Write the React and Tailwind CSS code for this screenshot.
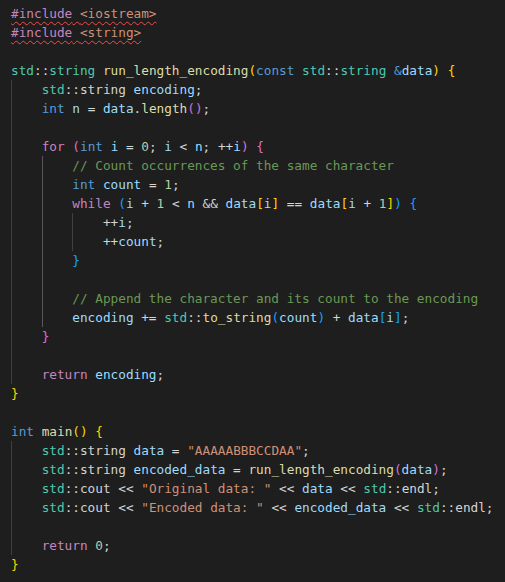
import React from "react";

const K = "text-[#569CD6]";
const P = "text-[#C586C0]";
const T = "text-[#4EC9B0]";
const F = "text-[#DCDCAA]";
const V = "text-[#9CDCFE]";
const W = "text-[#D4D4D4]";
const S = "text-[#CE9178]";
const N = "text-[#B5CEA8]";
const C = "text-[#6A9955]";
const B1 = "text-[#FFD700]";
const B2 = "text-[#DA70D6]";
const B3 = "text-[#179FFF]";

const lines = [
  { g: 0, squiggle: true, t: [["#include", P], [" ", W], ["<iostream>", S]] },
  { g: 0, squiggle: true, t: [["#include", P], [" ", W], ["<string>", S]] },
  { g: 0, t: [] },
  { g: 0, t: [["std", T], ["::", W], ["string", T], [" ", W], ["run_length_encoding", F], ["(", B1], ["const", K], [" ", W], ["std", T], ["::", W], ["string", T], [" ", W], ["&", K], ["data", V], [")", B1], [" ", W], ["{", B1]] },
  { g: 1, t: [["std", T], ["::string", W], [" ", W], ["encoding", V], [";", W]] },
  { g: 1, t: [["int", K], [" ", W], ["n", V], [" = ", W], ["data", V], [".", W], ["length", F], ["(", B2], [")", B2], [";", W]] },
  { g: 1, t: [] },
  { g: 1, t: [["for", P], [" ", W], ["(", B2], ["int", K], [" ", W], ["i", V], [" = ", W], ["0", N], ["; ", W], ["i", V], [" < ", W], ["n", V], ["; ++", W], ["i", V], [")", B2], [" ", W], ["{", B2]] },
  { g: 2, t: [["// Count occurrences of the same character", C]] },
  { g: 2, t: [["int", K], [" ", W], ["count", V], [" = ", W], ["1", N], [";", W]] },
  { g: 2, t: [["while", P], [" ", W], ["(", B3], ["i", V], [" + ", W], ["1", N], [" < ", W], ["n", V], [" && ", W], ["data", V], ["[", B1], ["i", V], ["]", B1], [" == ", W], ["data", V], ["[", B1], ["i", V], [" + ", W], ["1", N], ["]", B1], [")", B3], [" ", W], ["{", B3]] },
  { g: 3, t: [["++", W], ["i", V], [";", W]] },
  { g: 3, t: [["++", W], ["count", V], [";", W]] },
  { g: 2, t: [["}", B3]] },
  { g: 2, t: [] },
  { g: 2, t: [["// Append the character and its count to the encoding", C]] },
  { g: 2, t: [["encoding", V], [" += ", W], ["std", T], ["::", W], ["to_string", F], ["(", B3], ["count", V], [")", B3], [" + ", W], ["data", V], ["[", B3], ["i", V], ["]", B3], [";", W]] },
  { g: 1, t: [["}", B2]] },
  { g: 1, t: [] },
  { g: 1, t: [["return", P], [" ", W], ["encoding", V], [";", W]] },
  { g: 0, t: [["}", B1]] },
  { g: 0, t: [] },
  { g: 0, t: [["int", K], [" ", W], ["main", F], ["(", B1], [")", B1], [" ", W], ["{", B1]] },
  { g: 1, t: [["std", T], ["::string", W], [" ", W], ["data", V], [" = ", W], ['"AAAAABBBCCDAA"', S], [";", W]] },
  { g: 1, t: [["std", T], ["::string", W], [" ", W], ["encoded_data", V], [" = ", W], ["run_length_encoding", F], ["(", B2], ["data", V], [")", B2], [";", W]] },
  { g: 1, t: [["std", T], ["::cout", W], [" << ", W], ['"Original data: "', S], [" << ", W], ["data", V], [" << ", W], ["std", T], ["::endl", W], [";", W]] },
  { g: 1, t: [["std", T], ["::cout", W], [" << ", W], ['"Encoded data: "', S], [" << ", W], ["encoded_data", V], [" << ", W], ["std", T], ["::endl", W], [";", W]] },
  { g: 1, t: [] },
  { g: 1, t: [["return", P], [" ", W], ["0", N], [";", W]] },
  { g: 0, t: [["}", B1]] },
];

const guideClasses = [
  "shadow-[inset_1px_0_0_#404040]",
  "shadow-[inset_1px_0_0_#585858]",
  "shadow-[inset_1px_0_0_#404040]",
];

function Line({ line }) {
  const guides = [];
  for (let i = 0; i < line.g; i++) {
    guides.push(
      <span key={i} className={"h-full whitespace-pre " + guideClasses[i]}>
        {"    "}
      </span>
    );
  }
  return (
    <div className="flex h-[19px] items-center whitespace-pre">
      <div className="flex h-full items-stretch">{guides}</div>
      <span
        className={
          line.squiggle
            ? "underline decoration-wavy decoration-[#f14c4c] decoration-1 underline-offset-[3px]"
            : ""
        }
      >
        {line.t.map(([txt, cls], i) => (
          <span key={i} className={cls}>
            {txt}
          </span>
        ))}
      </span>
    </div>
  );
}

export default function App() {
  return (
    <div
      className="h-[582px] w-[505px] overflow-hidden bg-[#1e1e1e] pl-[11px] pt-[4px] text-[12.72px] leading-[19px] text-[#D4D4D4]"
      style={{ fontFamily: '"DejaVu Sans Mono", "Liberation Mono", monospace' }}
    >
      {lines.map((l, i) => (
        <Line key={i} line={l} />
      ))}
    </div>
  );
}
